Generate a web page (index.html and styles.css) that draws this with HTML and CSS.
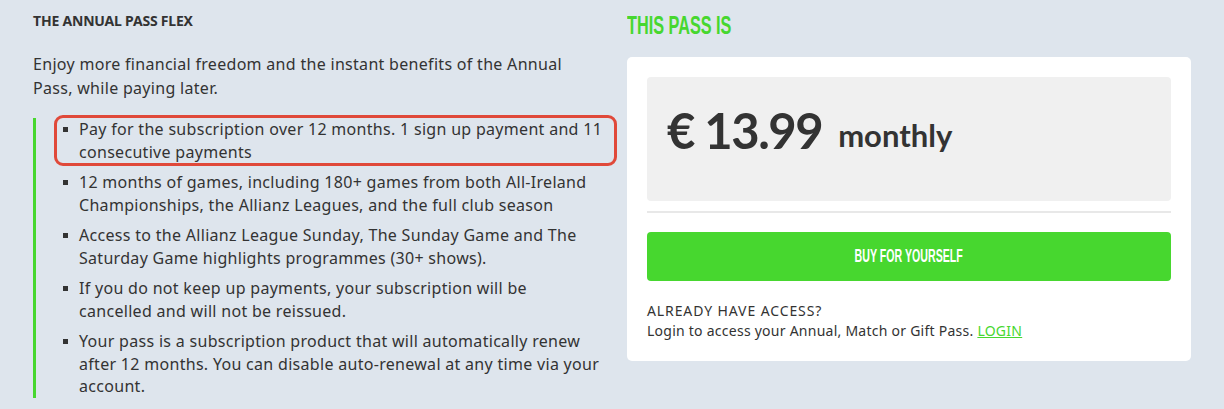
FILE: index.html
```html
<!DOCTYPE html>
<html>
<head>
<meta charset="utf-8">
<link rel="stylesheet" href="styles.css">
</head>
<body>
<div class="page">
  <section class="info">
    <h2 class="info-title">THE ANNUAL PASS FLEX</h2>
    <p class="info-lead">Enjoy more financial freedom and the instant benefits of the Annual Pass, while paying later.</p>
    <ul class="features">
      <li class="feature highlight">Pay for the subscription over 12 months. 1 sign up payment and 11 consecutive payments</li>
      <li class="feature">12 months of games, including 180+ games from both All-Ireland Championships, the Allianz Leagues, and the full club season</li>
      <li class="feature">Access to the Allianz League Sunday, The Sunday Game and The Saturday Game highlights programmes (30+ shows).</li>
      <li class="feature">If you do not keep up payments, your subscription will be<br>cancelled and will not be reissued.</li>
      <li class="feature">Your pass is a subscription product that will automatically renew after 12 months. You can disable auto-renewal at any time via your account.</li>
    </ul>
  </section>
  <aside class="purchase">
    <h2 class="purchase-title"><span class="narrow">THIS PASS IS</span></h2>
    <div class="card">
      <div class="price-box">
        <span class="price">€ 13.99</span>
        <span class="period">monthly</span>
      </div>
      <hr class="divider">
      <button class="buy"><span class="narrow">BUY FOR YOURSELF</span></button>
      <div class="access">
        <div class="access-title">ALREADY HAVE ACCESS?</div>
        <div class="access-text">Login to access your Annual, Match or Gift Pass. <a class="login" href="#">LOGIN</a></div>
      </div>
    </div>
  </aside>
</div>
</body>
</html>
```

FILE: styles.css
```css
html, body {
  margin: 0;
  padding: 0;
  background: #dee5ed;
}
body {
  font-family: "Noto Sans", "Open Sans", sans-serif;
  color: #333;
}
.page {
  display: flex;
  gap: 22px;
  padding: 0 0 0 33px;
  height: 409px;
  overflow: hidden;
}
.info {
  width: 572px;
  flex: none;
}
.info-title {
  margin: 12px 0 0;
  font-size: 14px;
  font-weight: 700;
  line-height: 18px;
  color: #333;
  letter-spacing: -0.2px;
}
.info-lead {
  margin: 22px 0 0;
  font-size: 16px;
  line-height: 24px;
  letter-spacing: 0.3px;
}
.features {
  list-style: none;
  margin: 18px 0 0;
  padding: 0 0 0 21px;
  border-left: 3px solid #47d72f;
}
.feature {
  position: relative;
  font-size: 16px;
  line-height: 22.5px;
  letter-spacing: 0.3px;
  padding: 0 0 0 22px;
  margin-bottom: 8px;
}
.feature:last-child { margin-bottom: 0; }
.feature::before {
  content: "";
  position: absolute;
  left: 6px;
  top: 9px;
  width: 5px;
  height: 5px;
  background: #333;
}
.highlight::after {
  content: "";
  position: absolute;
  left: -3px;
  right: -12px;
  top: -3px;
  bottom: -3px;
  border: 3px solid #e0493a;
  border-radius: 9px;
}
.purchase {
  width: 564px;
  flex: none;
}
.narrow {
  display: inline-block;
  font-family: "Liberation Sans", Arial, sans-serif;
  font-weight: 700;
  transform-origin: left center;
}
.purchase-title {
  margin: 11px 0 0;
  font-size: 25px;
  font-weight: 700;
  line-height: 26px;
  color: #47d72f;
  white-space: nowrap;
}
.purchase-title .narrow {
  transform: scaleX(0.65);
}
.card {
  margin-top: 19px;
  background: #fff;
  border-radius: 5px;
  padding: 20px 20px 20px;
}
.price-box {
  background: #f0f0f0;
  border-radius: 4px;
  height: 124px;
  box-sizing: border-box;
  padding: 0 20px 18px;
  display: flex;
  align-items: center;
  gap: 16px;
  color: #333;
}
.price {
  font-family: "Lato", sans-serif;
  font-size: 49px;
  font-weight: 700;
  letter-spacing: -1.5px;
}
.period {
  font-family: "Lato", sans-serif;
  font-size: 31px;
  font-weight: 700;
  margin-top: 10px;
}
.divider {
  border: none;
  height: 2px;
  background: #e8e8e8;
  margin: 10px 0 0;
}
.buy {
  display: flex;
  justify-content: center;
  align-items: center;
  width: 100%;
  height: 49px;
  margin-top: 19px;
  border: none;
  border-radius: 4px;
  background: #47d72f;
  color: #fff;
  font-size: 18px;
  padding: 0;
}
.buy .narrow {
  transform: scaleX(0.59);
  transform-origin: center center;
}
.access {
  margin-top: 20px;
  font-size: 14px;
  line-height: 20px;
  letter-spacing: 0.25px;
  color: #333;
}
.access-title {
  letter-spacing: 0.9px;
}
.login {
  color: #47d72f;
  text-decoration: underline;
}
```
